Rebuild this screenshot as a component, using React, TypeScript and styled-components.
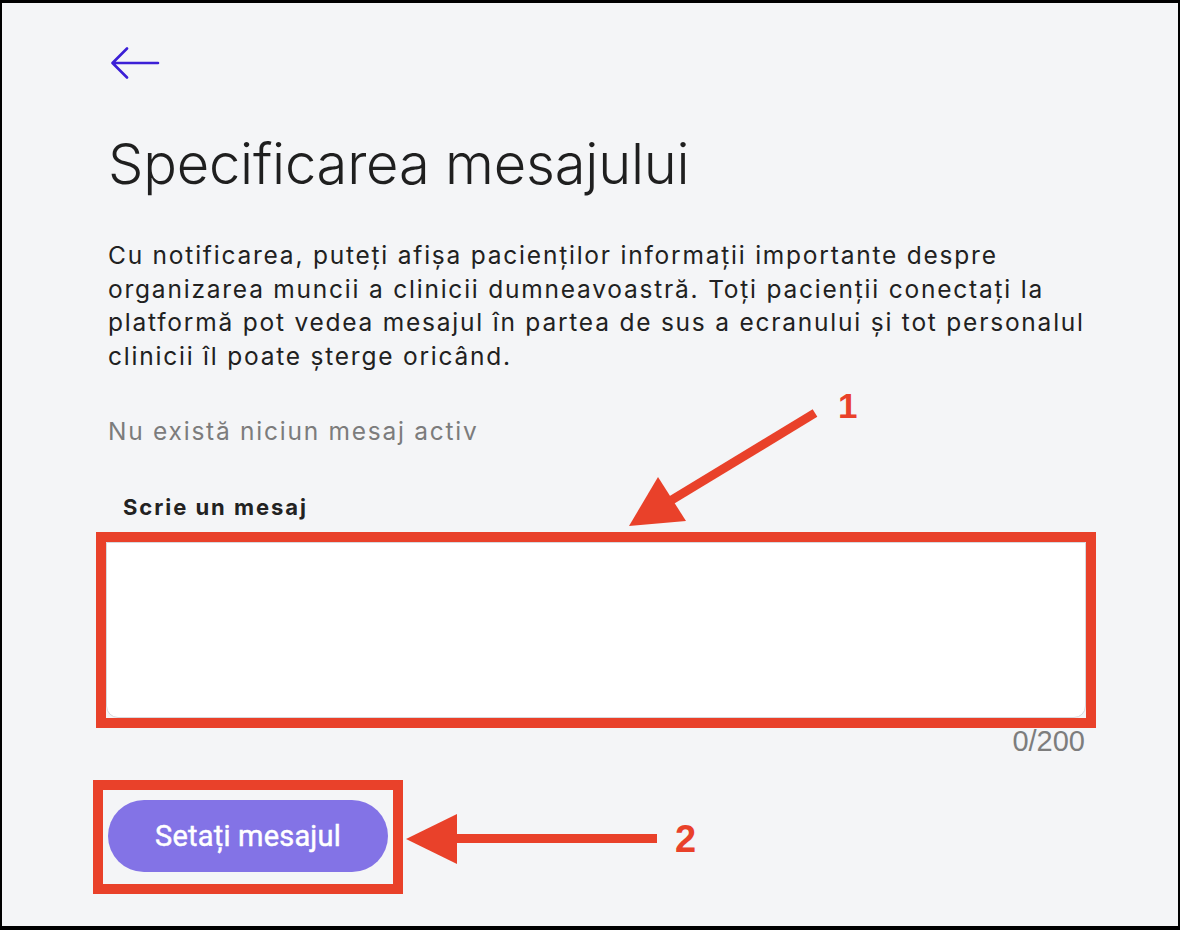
import styled, { createGlobalStyle } from 'styled-components';

const GlobalStyle = createGlobalStyle`
  * {
    box-sizing: border-box;
  }

  html,
  body {
    margin: 0;
    padding: 0;
    background: #000;
  }
`;

const descriptionLines = [
  'Cu notificarea, puteți afișa pacienților informații importante despre',
  'organizarea muncii a clinicii dumneavoastră. Toți pacienții conectați la',
  'platformă pot vedea mesajul în partea de sus a ecranului și tot personalul',
  'clinicii îl poate șterge oricând.',
];

const MAX_LENGTH = 200;

const App = () => {
  return (
    <>
      <GlobalStyle />
      <StFrame>
        <StContent>
          <StBackButton type="button" aria-label="Înapoi">
            <svg width="50" height="32" viewBox="0 0 50 32" fill="none">
              <path
                d="M48 16H3M17 1.5L2.5 16L17 30.5"
                stroke="#3b1fd6"
                strokeWidth="2.6"
                strokeLinecap="round"
                strokeLinejoin="round"
              />
            </svg>
          </StBackButton>

          <StTitle>Specificarea mesajului</StTitle>

          <StDescription>
            {descriptionLines.map((line) => (
              <StLine key={line}>{line}</StLine>
            ))}
          </StDescription>

          <StStatus>Nu există niciun mesaj activ</StStatus>

          <StLabel htmlFor="message">Scrie un mesaj</StLabel>
          <StHighlight $offset={12} $pad="0">
            <StTextarea id="message" maxLength={MAX_LENGTH} />
          </StHighlight>
          <StCounter>0/{MAX_LENGTH}</StCounter>

          <StHighlight $offset={15} $pad="10px 5px 12px">
            <StSubmitButton type="button">Setați mesajul</StSubmitButton>
          </StHighlight>
        </StContent>

        <StAnnotations viewBox="0 0 1176 923" width="1176" height="923">
          <g fill="#e9412a" stroke="none">
            <line
              x1="813"
              y1="410"
              x2="668"
              y2="498"
              stroke="#e9412a"
              strokeWidth="9"
            />
            <polygon points="627,523 656,474 684,518" />
            <rect x="455" y="831" width="200" height="9" />
            <polygon points="404,836 455,811 455,861" />
          </g>
          <StNumber x="836" y="415" $size={35}>
            1
          </StNumber>
          <StNumber x="673" y="849" $size={38}>
            2
          </StNumber>
        </StAnnotations>
      </StFrame>
    </>
  );
};

export default App;

const StFrame = styled.main`
  position: relative;
  width: 1180px;
  height: 930px;

  border-style: solid;
  border-color: #000;
  border-width: 3px 2px 4px 2px;

  background-color: #f4f5f7;
  overflow: hidden;
`;

const StContent = styled.section`
  display: flex;
  flex-direction: column;
  align-items: flex-start;

  width: 980px;
  padding-top: 44px;
  margin-left: 106px;
`;

const StBackButton = styled.button`
  display: flex;
  padding: 0;
  margin-left: 2px;
  border: none;

  background: none;
  cursor: pointer;
`;

const StTitle = styled.h1`
  margin: 50px 0 0;

  font-family: Inter, 'Noto Sans', sans-serif;
  font-size: 56px;
  font-weight: 300;
  line-height: 70px;
  letter-spacing: -0.2px;
  color: #1f1f1f;
`;

const StDescription = styled.p`
  margin: 40px 0 0;

  font-family: Inter, 'Noto Sans', sans-serif;
  font-size: 24.5px;
  font-weight: 400;
  line-height: 33.6px;
  letter-spacing: 1.78px;
  color: #212121;
`;

const StLine = styled.span`
  display: block;
  white-space: nowrap;
`;

const StStatus = styled.p`
  margin: 42px 0 0;

  font-family: Inter, 'Noto Sans', sans-serif;
  font-size: 24.5px;
  line-height: 33px;
  letter-spacing: 1.75px;
  color: #7c7c7c;
`;

const StLabel = styled.label`
  margin: 46px 0 12px 15px;

  font-family: Inter, 'Noto Sans', sans-serif;
  font-size: 22px;
  font-weight: 700;
  line-height: 26px;
  letter-spacing: 1.95px;
  color: #222;
`;

const StHighlight = styled.div<{ $offset: number; $pad: string }>`
  display: flex;
  padding: ${({ $pad }) => $pad};
  margin-left: -${({ $offset }) => $offset}px;
  border: 10px solid #e9412a;
`;

const StTextarea = styled.textarea`
  width: 980px;
  height: 176px;
  padding: 12px 16px;
  border: 1px solid #d6d9de;
  border-radius: 0 0 12px 12px;

  background-color: #fff;
  font-family: Inter, sans-serif;
  font-size: 20px;
  resize: none;
  outline: none;
`;

const StCounter = styled.span`
  align-self: flex-end;
  margin: -2px 3px 24px 0;

  font-family: 'Liberation Sans', Arial, sans-serif;
  font-size: 29px;
  line-height: 30px;
  color: #7d7d7d;
`;

const StSubmitButton = styled.button`
  width: 280px;
  height: 72px;
  padding: 0;
  border: none;
  border-radius: 36px;

  background-color: #8373e6;
  font-family: Roboto, 'Liberation Sans', sans-serif;
  font-size: 29px;
  font-weight: 400;
  letter-spacing: 0.2px;
  color: #fff;
  -webkit-text-stroke: 0.45px #fff;
  cursor: pointer;
`;

const StAnnotations = styled.svg`
  position: absolute;
  top: 0;
  left: 0;
  pointer-events: none;
`;

const StNumber = styled.text<{ $size: number }>`
  font-family: 'Liberation Sans', Arial, sans-serif;
  font-size: ${({ $size }) => $size}px;
  font-weight: 700;
  fill: #e9412a;
`;
